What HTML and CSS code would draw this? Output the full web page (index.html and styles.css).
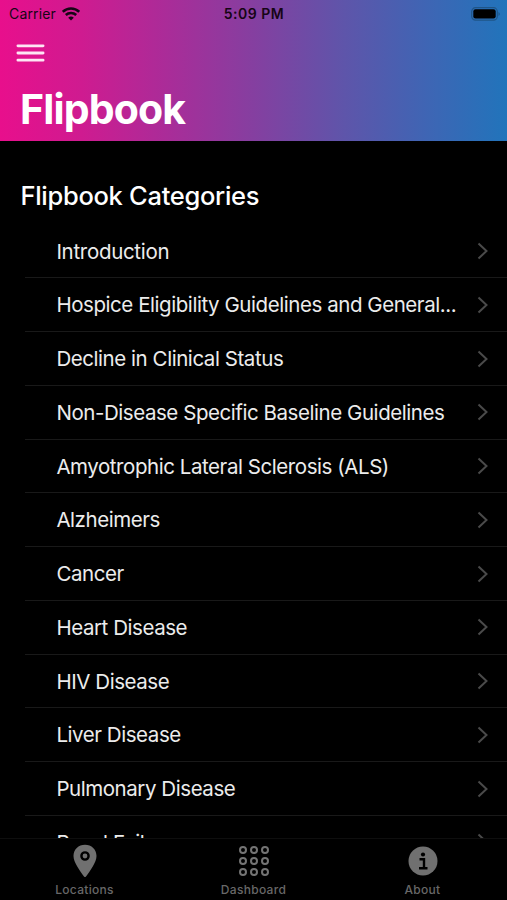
FILE: index.html
```html
<!DOCTYPE html>
<html lang="en">
<head>
<meta charset="utf-8">
<title>Flipbook</title>
<link rel="stylesheet" href="styles.css">
</head>
<body>
<div class="app">
  <header class="header">
    <div class="status">
      <div class="carrier"><span>Carrier</span>
        <svg width="18" height="14" viewBox="0 0 18 14" fill="none" stroke="#160515" stroke-width="2.5"><path d="M.8 4.8C5.4.4 12.6.4 17.2 4.8M3.8 8c2.900-2.800 7.500-2.800 10.400 0"/><path d="M9 13.600 6.200 10.800q2.800-2.500 5.600 0z" fill="#160515" stroke="none"/></svg>
      </div>
      <time class="clock">5:09 PM</time>
      <svg class="battery" width="30" height="14" viewBox="0 0 30 14"><rect x=".7" y=".7" width="25.600" height="12.400" rx="3.800" fill="none" stroke="#1f5587" stroke-width="1.200"/><rect x="2.300" y="2.300" width="22.400" height="9.200" rx="2.200" fill="#000"/><path d="M27.600 4.900q2 2 0 4z" fill="#174a78"/></svg>
    </div>
    <button class="menu" aria-label="Menu"><svg width="29" height="18" viewBox="0 0 29 18" stroke="#fde6f4" stroke-width="2.800" stroke-linecap="round"><path d="M1.900 1.800h25.200M1.900 9h25.200M1.900 16.200h25.200"/></svg></button>
    <h1 class="title">Flipbook</h1>
  </header>
  <main class="content">
    <h2 class="heading">Flipbook Categories</h2>
    <ul class="list">
      <li class="row"><span class="label loose">Introduction</span><svg class="chevron" viewBox="0 0 11 18"><path d="m1.500 1.500 8 7.500-8 7.500"/></svg></li>
      <li class="row"><span class="label">Hospice Eligibility Guidelines and General...</span><svg class="chevron" viewBox="0 0 11 18"><path d="m1.500 1.500 8 7.500-8 7.500"/></svg></li>
      <li class="row"><span class="label">Decline in Clinical Status</span><svg class="chevron" viewBox="0 0 11 18"><path d="m1.500 1.500 8 7.500-8 7.500"/></svg></li>
      <li class="row"><span class="label">Non-Disease Specific Baseline Guidelines</span><svg class="chevron" viewBox="0 0 11 18"><path d="m1.500 1.500 8 7.500-8 7.500"/></svg></li>
      <li class="row"><span class="label">Amyotrophic Lateral Sclerosis (ALS)</span><svg class="chevron" viewBox="0 0 11 18"><path d="m1.500 1.500 8 7.500-8 7.500"/></svg></li>
      <li class="row"><span class="label">Alzheimers</span><svg class="chevron" viewBox="0 0 11 18"><path d="m1.500 1.500 8 7.500-8 7.500"/></svg></li>
      <li class="row"><span class="label">Cancer</span><svg class="chevron" viewBox="0 0 11 18"><path d="m1.500 1.500 8 7.500-8 7.500"/></svg></li>
      <li class="row"><span class="label">Heart Disease</span><svg class="chevron" viewBox="0 0 11 18"><path d="m1.500 1.500 8 7.500-8 7.500"/></svg></li>
      <li class="row"><span class="label">HIV Disease</span><svg class="chevron" viewBox="0 0 11 18"><path d="m1.500 1.500 8 7.500-8 7.500"/></svg></li>
      <li class="row"><span class="label">Liver Disease</span><svg class="chevron" viewBox="0 0 11 18"><path d="m1.500 1.500 8 7.500-8 7.500"/></svg></li>
      <li class="row"><span class="label">Pulmonary Disease</span><svg class="chevron" viewBox="0 0 11 18"><path d="m1.500 1.500 8 7.500-8 7.500"/></svg></li>
      <li class="row"><span class="label">Renal Failure</span><svg class="chevron" viewBox="0 0 11 18"><path d="m1.500 1.500 8 7.500-8 7.500"/></svg></li>
    </ul>
  </main>
  <nav class="tabs">
    <a class="tab"><svg width="34" height="34" viewBox="0 0 34 34"><path d="M17 .8C10.500.8 5.500 5.600 5.500 12c0 3.400 1.500 6.700 3.600 10.200 2.200 3.700 4.700 7.300 6.900 10.200q1 1.200 2 0c2.200-2.900 4.700-6.500 6.900-10.200 2.100-3.500 3.600-6.800 3.600-10.200C28.500 5.600 23.500.8 17 .8z" fill="#707070"/><circle cx="17" cy="12" r="3.600" fill="#707070" stroke="#000" stroke-width="2.400"/></svg><span>Locations</span></a>
    <a class="tab"><svg width="34" height="34" viewBox="0 0 34 34" fill="none" stroke="#747474" stroke-width="2"><circle cx="6" cy="6" r="3"/><circle cx="17" cy="6" r="3"/><circle cx="28" cy="6" r="3"/><circle cx="6" cy="17" r="3"/><circle cx="17" cy="17" r="3"/><circle cx="28" cy="17" r="3"/><circle cx="6" cy="28" r="3"/><circle cx="17" cy="28" r="3"/><circle cx="28" cy="28" r="3"/></svg><span>Dashboard</span></a>
    <a class="tab"><svg width="34" height="34" viewBox="0 0 34 34"><circle cx="17" cy="17" r="14.500" fill="#707070"/><circle cx="17" cy="10.500" r="2.100" fill="#000"/><path d="M13.500 15.300h4.500v8.700M13 24.200h8.500" fill="none" stroke="#000" stroke-width="2.400"/></svg><span>About</span></a>
  </nav>
</div>
</body>
</html>
```
FILE: styles.css
```css
* { box-sizing: border-box; }
body {
  margin: 0;
  background: #000;
  color: #ececec;
  font-family: Inter, "Liberation Sans", sans-serif;
}
.app {
  display: flex;
  flex-direction: column;
  height: 900px;
  overflow: hidden;
}
.header {
  flex: none;
  height: 141px;
  background: linear-gradient(90deg, #e80f8c 0%, #cf1b90 16%, #ac2b98 32%, #853fa0 50%, #5e55aa 68%, #3f65b4 84%, #2174bb 100%);
}
.status {
  display: grid;
  grid-template-columns: 1fr auto 1fr;
  align-items: center;
  height: 27px;
  padding: 0 6px 0 9px;
  color: #160515;
  font-size: 14px;
}
.carrier {
  display: flex;
  align-items: center;
  gap: 6px;
  letter-spacing: .15px;
}
.clock {
  font-weight: 600;
  letter-spacing: .5px;
  margin-right: 2px;
}
.battery { justify-self: end; }
.menu {
  display: block;
  margin: 17px 0 0 16px;
  padding: 0;
  border: 0;
  background: none;
  height: 18px;
}
.menu svg { display: block; }
.title {
  margin: 23px 0 0 20px;
  color: #fff;
  font-size: 41px;
  line-height: 48px;
  font-weight: 700;
  letter-spacing: -.85px;
}
.content {
  flex: 1;
  min-height: 0;
  overflow: hidden;
}
.heading {
  margin: 39px 0 0 20.500px;
  color: #fff;
  font-size: 25.500px;
  line-height: 32px;
  font-weight: 500;
  letter-spacing: -.3px;
}
.list {
  margin: 12.700px 0 0 25px;
  padding: 0;
  list-style: none;
}
.row {
  display: flex;
  align-items: center;
  justify-content: space-between;
  height: 53.760px;
  padding: 0 19px 0 31.400px;
  border-bottom: 1px solid #191919;
}
.label {
  font-size: 20.500px;
  white-space: nowrap;
  letter-spacing: -.44px;
}
.loose { letter-spacing: -.3px; }
.chevron {
  flex: none;
  width: 11px;
  height: 18px;
  fill: none;
  stroke: #4a4a4a;
  stroke-width: 2;
}
.tabs {
  flex: none;
  display: grid;
  grid-template-columns: repeat(3, 1fr);
  height: 62px;
  border-top: 1px solid #0e0e0e;
  background: #000;
}
.tab {
  display: flex;
  flex-direction: column;
  align-items: center;
  padding-top: 5px;
  color: #686868;
  font-size: 12px;
  line-height: 15px;
  font-weight: 500;
  letter-spacing: .3px;
}
.tab span { margin-top: 4px; }
```
